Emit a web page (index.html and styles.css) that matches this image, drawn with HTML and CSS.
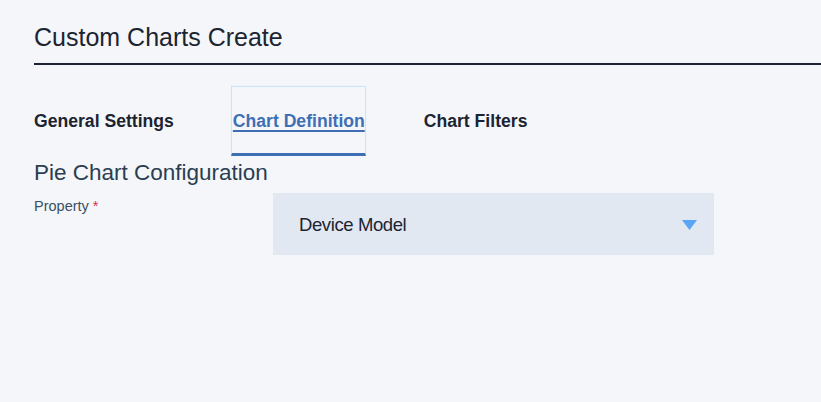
FILE: index.html
```html
<!DOCTYPE html>
<html lang="en">
<head>
<meta charset="utf-8">
<title>Custom Charts Create</title>
<link rel="stylesheet" href="styles.css">
</head>
<body>
<div class="page">
  <header class="page-header">
    <h1 class="page-title">Custom Charts Create</h1>
  </header>
  <nav class="tabs">
    <a class="tab">General Settings</a>
    <a class="tab tab-active">Chart Definition</a>
    <a class="tab">Chart Filters</a>
  </nav>
  <section class="config">
    <h2 class="config-title">Pie Chart Configuration</h2>
    <div class="field">
      <label class="field-label">Property <span class="required">*</span></label>
      <div class="select">
        <span class="select-value">Device Model</span>
        <svg class="select-caret" width="15" height="10" viewBox="0 0 15 10"><polygon points="0,0 15,0 7.5,10" fill="#5aa6f5"/></svg>
      </div>
    </div>
  </section>
</div>
</body>
</html>
```

FILE: styles.css
```css
html, body {
  margin: 0;
  padding: 0;
  background: #f4f6fa;
  font-family: "Liberation Sans", Arial, sans-serif;
}

.page {
  padding: 0 0 0 34px;
}

.page-header {
  border-bottom: 2px solid #1b2430;
  padding: 22px 0 11px;
}

.page-title {
  margin: 0;
  font-size: 25px;
  font-weight: 400;
  color: #1b2430;
  line-height: 30px;
}

.tabs {
  display: flex;
  gap: 59px;
  margin-top: 21px;
  height: 70px;
}

.tab {
  display: flex;
  align-items: center;
  box-sizing: border-box;
  height: 70px;
  padding: 0;
  font-size: 17.6px;
  font-weight: 700;
  color: #1b2430;
  text-decoration: none;
}

.tab-active {
  color: #3e6fb5;
  text-decoration: underline;
  text-decoration-thickness: 2px;
  text-underline-offset: 3px;
  border: 1px solid #c9e4fb;
  border-bottom: 3px solid #3e6fb5;
  box-shadow: 0 0 1px #d8ecfc;
  padding: 2px 0 0 1px;
  margin-left: -2px;
  margin-right: -1px;
}

.config {
  padding-top: 2px;
}

.config-title {
  margin: 0;
  font-size: 22.5px;
  font-weight: 400;
  color: #2a3e50;
  line-height: 30px;
}

.field {
  display: flex;
  align-items: flex-start;
  margin-top: 5px;
}

.field-label {
  width: 239px;
  font-size: 14.5px;
  color: #3a5060;
  line-height: 18px;
  padding-top: 4px;
}

.required {
  color: #e0304e;
}

.select {
  display: flex;
  align-items: center;
  justify-content: space-between;
  width: 441px;
  height: 62px;
  box-sizing: border-box;
  padding: 2px 17px 0 26px;
  background: #e1e8f2;
}

.select-value {
  font-size: 18.5px;
  letter-spacing: -0.4px;
  color: #1b2430;
}

.select-caret {
  display: block;
}
```
